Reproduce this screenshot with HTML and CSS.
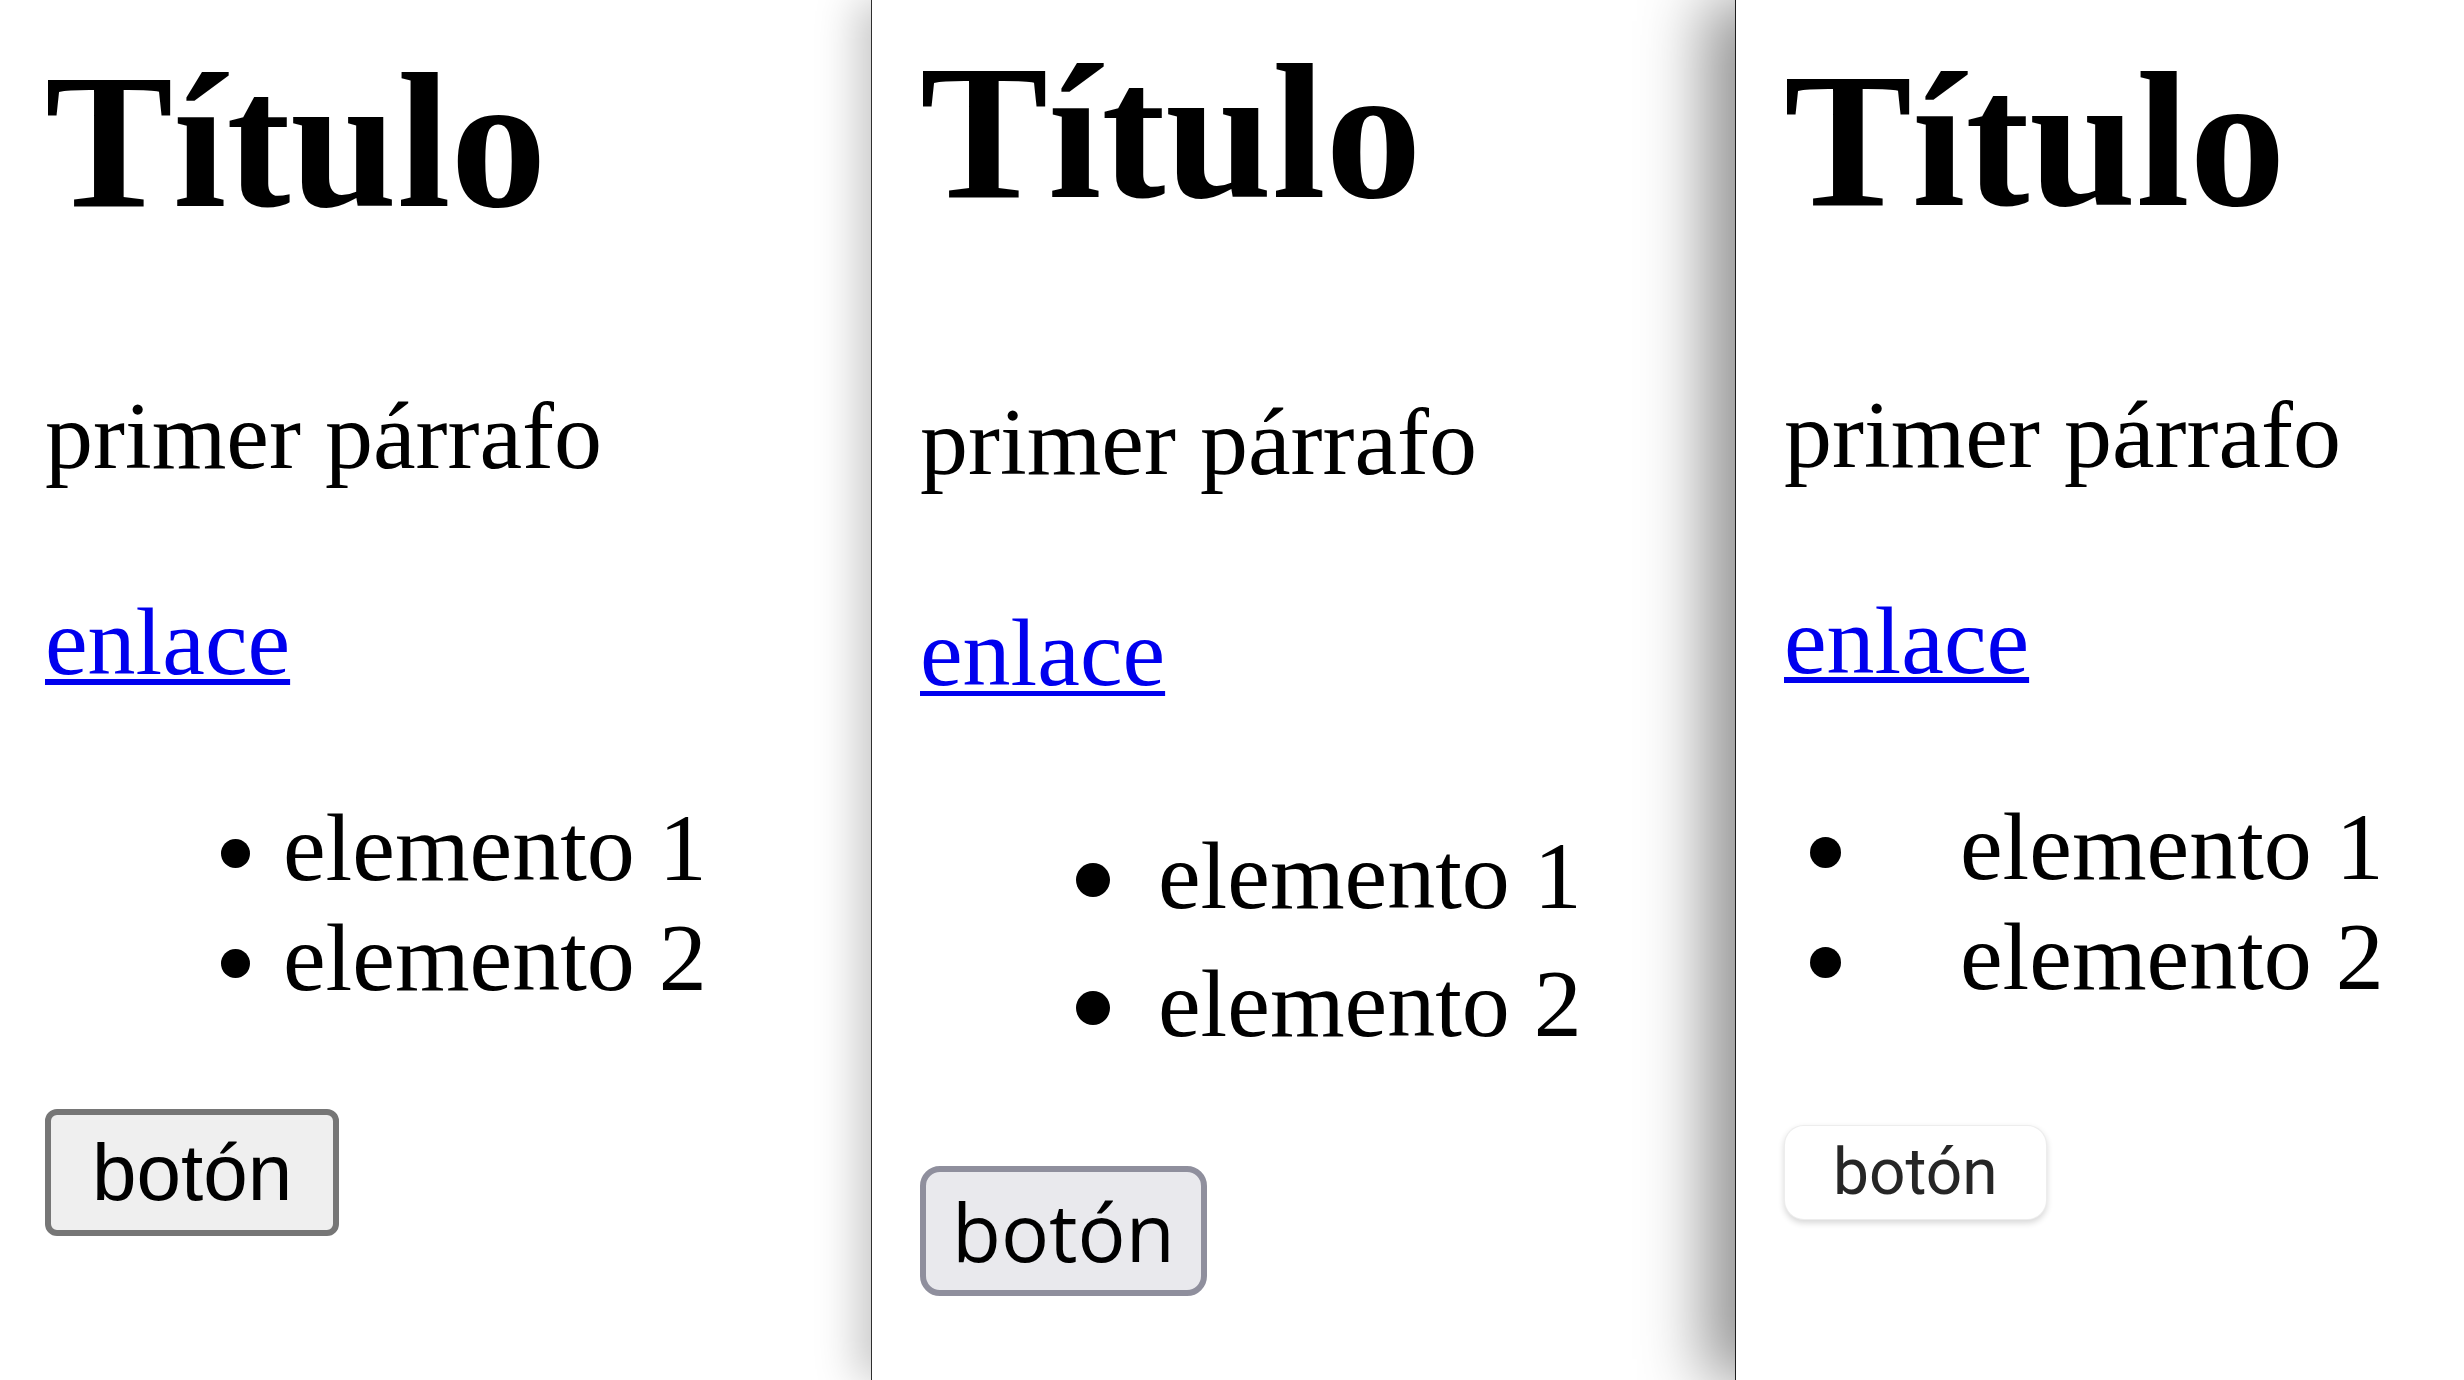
FILE: index.html
```html
<!doctype html>
<html lang="es">
<head>
	<meta charset="UTF-8">
	<title>Estilos por defecto</title>
	<link rel="stylesheet" href="styles.css">
</head>
<body>
	<div class="panel chrome">
		<h1>Título</h1>
		<p>primer párrafo</p>
		<p class="link"><a href="#">enlace</a></p>
		<ul>
			<li>elemento 1</li>
			<li>elemento 2</li>
		</ul>
		<button>botón</button>
	</div>

	<div class="panel firefox">
		<h1>Título</h1>
		<p>primer párrafo</p>
		<p class="link"><a href="#">enlace</a></p>
		<ul>
			<li>elemento 1</li>
			<li>elemento 2</li>
		</ul>
		<button>botón</button>
	</div>

	<div class="panel safari">
		<h1>Título</h1>
		<p>primer párrafo</p>
		<p class="link"><a href="#">enlace</a></p>
		<ul>
			<li>elemento 1</li>
			<li>elemento 2</li>
		</ul>
		<button>botón</button>
	</div>
</body>
</html>
```

FILE: styles.css
```css
*{
	margin:0;
	padding:0;
	box-sizing:border-box;
}

body{
	display:flex;
	height:100vh;
	overflow:hidden;
	background:#fff;
	color:#000;
	font-family:"Liberation Serif", "Times New Roman", serif;
}

/* cada panel es una ventana, la de la derecha tapa a la de la izquierda */
.panel{
	background:#fff;
	height:100%;
}

.chrome{
	flex:0 0 871px;
	padding:31px 0 0 45px;
}

.firefox{
	flex:0 0 864px;
	padding:22px 0 0 48px;
	border-left:1px solid #2e2e2e;
	box-shadow:-14px 0 40px rgba(0,0,0,0.22);
}

.safari{
	flex:1;
	padding:30px 0 0 48px;
	border-left:1px solid #1e1e1e;
	box-shadow:-30px 0 60px rgba(0,0,0,0.42);
}

h1{
	font-size:192px;
	font-weight:bold;
	line-height:221px;
}

p{
	font-size:96px;
	line-height:110px;
	margin-top:129px;
}

p.link{
	margin-top:96px;
}

a{
	color:#0000ee;
	text-decoration:underline;
	text-decoration-thickness:6px;
	text-underline-offset:5px;
}

ul{
	list-style:none;
	font-size:96px;
	line-height:110px;
	margin-top:96px;
	padding-left:238px;
}

/* la viñeta se dibuja como un circulo en linea, antes del texto */
li::before{
	content:"";
	display:inline-block;
	width:29px;
	height:29px;
	border-radius:50%;
	background:#000;
	vertical-align:12px;
	margin-left:-62px;
	margin-right:33px;
}

button{
	display:block;
	width:fit-content;
	margin-top:96px;
	font-family:"Liberation Sans", Arial, sans-serif;
	font-size:80px;
	line-height:115px;
	padding:0 41px;
	color:#000;
	background:#efefef;
	border:6px solid #767676;
	border-radius:12px;
}

/* ---- firefox ---- */
.firefox p{
	line-height:115px;
	margin-top:141px;
}

.firefox p.link{
	margin-top:96px;
}

.firefox a{
	text-decoration-thickness:5px;
	text-underline-offset:6px;
}

.firefox ul{
	line-height:128px;
	margin-top:102px;
	padding-left:238px;
}

.firefox li::before{
	width:34px;
	height:34px;
	vertical-align:11px;
	margin-left:-82px;
	margin-right:48px;
}

.firefox button{
	margin-top:98px;
	font-family:"Open Sans", sans-serif;
	line-height:118px;
	padding:0 26px;
	background:#e9e9ed;
	border-color:#8f8f9d;
	border-radius:20px;
}

/* ---- safari ---- */
.safari a{
	text-decoration-thickness:6px;
	text-underline-offset:4px;
}

.safari ul{
	padding-left:176px;
}

.safari li::before{
	width:31px;
	height:31px;
	vertical-align:11px;
	margin-left:-150px;
	margin-right:119px;
}

.safari button{
	margin-top:113px;
	font-family:Roboto, sans-serif;
	font-size:64px;
	line-height:93px;
	padding:0 48px;
	color:#262626;
	background:#fff;
	border:1px solid rgba(0,0,0,0.07);
	border-radius:20px;
	box-shadow:0 3px 6px rgba(0,0,0,0.16);
}
```
